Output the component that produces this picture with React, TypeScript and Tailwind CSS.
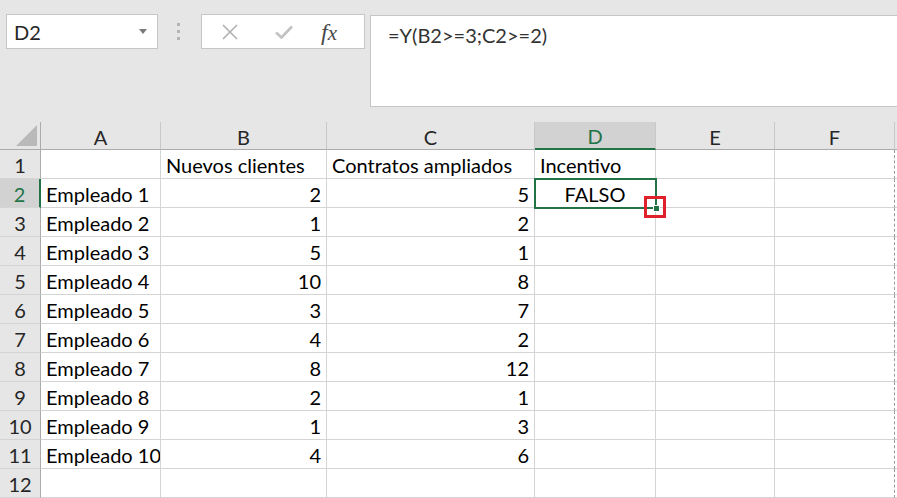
import React from 'react';

const cols = ['A', 'B', 'C', 'D', 'E', 'F'];

const data: [string, number, number][] = [
    ['Empleado 1', 2, 5],
    ['Empleado 2', 1, 2],
    ['Empleado 3', 5, 1],
    ['Empleado 4', 10, 8],
    ['Empleado 5', 3, 7],
    ['Empleado 6', 4, 2],
    ['Empleado 7', 8, 12],
    ['Empleado 8', 2, 1],
    ['Empleado 9', 1, 3],
    ['Empleado 10', 4, 6],
];

function Cell({ children, align = 'left', last = false }: { children?: React.ReactNode; align?: 'left' | 'right' | 'center'; last?: boolean }) {
    const a = align === 'right' ? 'justify-end' : align === 'center' ? 'justify-center' : 'justify-start';
    return (
        <div
            className={`flex h-[29px] items-end overflow-hidden whitespace-nowrap border-b border-r border-[#d4d4d4] bg-white px-[5px] pb-[1px] text-[20px] leading-[24px] text-black ${a} ${
                last ? 'border-r-[#9a9a9a] [border-right-style:dashed]' : ''
            }`}
        >
            {children}
        </div>
    );
}

function RowHead({ n, active = false }: { n: number; active?: boolean }) {
    return (
        <div
            className={`flex h-[29px] items-center justify-center border-b border-b-[#d4d4d4] pt-[2px] text-[20px] ${
                active ? 'border-r-2 border-r-[#217346] bg-[#d2d2d2] text-[#217346]' : 'border-r border-r-[#ababab] bg-[#e6e6e6] text-[#262626]'
            }`}
        >
            {n}
        </div>
    );
}

export default function App() {
    return (
        <div className="flex h-[498px] w-[897px] flex-col overflow-hidden bg-[#e6e6e6] font-['Lato',sans-serif]">
            {/* formula bar */}
            <div className="flex h-[122px] shrink-0 items-start pt-[14px]">
                <div className="ml-[6px] flex h-[35px] w-[152px] items-center justify-between border border-[#c6c6c6] bg-white pl-[7px] pr-[10px]">
                    <span className="text-[20px] text-[#262626]">D2</span>
                    <svg width="8" height="5" viewBox="0 0 8 5"><path d="M0 0h8L4 5z" fill="#7a7a7a" /></svg>
                </div>
                <div className="ml-[19px] mt-[9px] flex flex-col gap-[4px]">
                    <span className="h-[3px] w-[3px] bg-[#b4b4b4]" />
                    <span className="h-[3px] w-[3px] bg-[#b4b4b4]" />
                    <span className="h-[3px] w-[3px] bg-[#b4b4b4]" />
                </div>
                <div className="ml-[21px] flex h-[35px] w-[164px] items-center border border-[#c6c6c6] bg-white">
                    <svg className="ml-[20px]" width="16" height="16" viewBox="0 0 16 16">
                        <path d="M1 1L15 15M15 1L1 15" stroke="#b0b0b0" strokeWidth="1.6" fill="none" />
                    </svg>
                    <svg className="ml-[37px]" width="18" height="14" viewBox="0 0 18 14">
                        <path d="M1 7.5L6.5 12.5L17 1.5" stroke="#c2c2c2" strokeWidth="2.6" fill="none" />
                    </svg>
                    <span className="ml-[28px] font-['Liberation_Serif',serif] text-[24px] italic leading-none text-[#4a4a4a]">
                        f<span className="text-[21px]">x</span>
                    </span>
                </div>
                <div className="ml-[5px] mt-[1px] h-[92px] flex-1 border border-r-0 border-[#c6c6c6] bg-white pl-[17px] pt-[4px]">
                    <span className="text-[20px] text-[#333]">=Y(B2&gt;=3;C2&gt;=2)</span>
                </div>
            </div>

            {/* sheet */}
            <div className="grid flex-1 grid-cols-[41px_120px_166px_208px_121px_119px_120px_2px] content-start bg-white">
                {/* column headers */}
                <div className="relative h-[28px] border-b border-r border-b-[#ababab] border-r-[#ababab] bg-[#e6e6e6]">
                    <svg className="absolute bottom-[3px] right-[3px]" width="21" height="21" viewBox="0 0 21 21">
                        <path d="M21 0V21H0z" fill="#b9b9b9" />
                    </svg>
                </div>
                {cols.map((c) => (
                    <div
                        key={c}
                        className={`flex h-[28px] items-center justify-center border-r border-r-[#c8c8c8] pt-[2px] text-[20px] ${
                            c === 'D' ? 'border-b-2 border-b-[#217346] bg-[#d2d2d2] text-[#217346]' : 'border-b border-b-[#ababab] bg-[#e6e6e6] text-[#262626]'
                        }`}
                    >
                        {c}
                    </div>
                ))}
                <div className="h-[28px] border-b border-b-[#ababab] bg-[#e6e6e6]" />

                {/* row 1 */}
                <RowHead n={1} />
                <Cell />
                <Cell>Nuevos clientes</Cell>
                <Cell>Contratos ampliados</Cell>
                <Cell>Incentivo</Cell>
                <Cell />
                <Cell last />
                <div className="h-[29px] border-b border-[#d4d4d4]" />

                {data.map(([name, b, c], i) => (
                    <React.Fragment key={name}>
                        <RowHead n={i + 2} active={i === 0} />
                        <Cell>{name}</Cell>
                        <Cell align="right">{b}</Cell>
                        <Cell align="right">{c}</Cell>
                        {i === 0 ? (
                            <div className="relative">
                                <Cell align="center">FALSO</Cell>
                                <div className="absolute -left-px -top-px h-[31px] w-[123px] border-2 border-[#217346]" />
                                <div className="absolute -right-[4px] -bottom-[4px] h-[7px] w-[7px] border border-white bg-[#217346]" />
                                <div className="absolute -right-[10px] -bottom-[10px] h-[22px] w-[22px] border-[3px] border-[#e0202b]" />
                            </div>
                        ) : (
                            <Cell />
                        )}
                        <Cell />
                        <Cell last />
                        <div className="h-[29px] border-b border-[#d4d4d4]" />
                    </React.Fragment>
                ))}

                <RowHead n={12} />
                <Cell />
                <Cell />
                <Cell />
                <Cell />
                <Cell />
                <Cell last />
                <div className="h-[29px] border-b border-[#d4d4d4]" />
            </div>
        </div>
    );
}
